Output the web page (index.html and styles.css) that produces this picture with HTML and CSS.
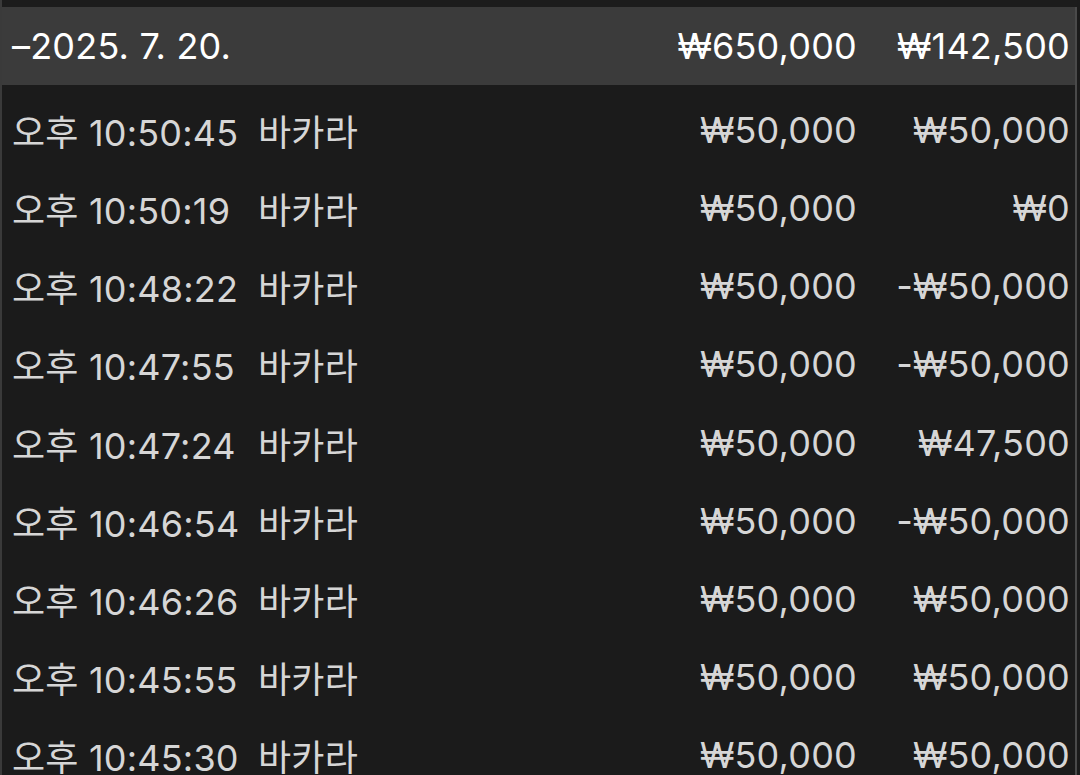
FILE: index.html
```html
<!DOCTYPE html>
<html lang="ko">
<head>
<meta charset="utf-8">
<link rel="stylesheet" href="styles.css">
</head>
<body>
<div class="frame">
  <div class="top-strip"></div>
  <div class="list">
    <div class="row header">
      <span class="time">–2025. 7. 20.</span>
      <span class="game"></span>
      <span class="bet">₩650,000</span>
      <span class="win">₩142,500</span>
    </div>
    <div class="row"><span class="time">오후 10:50:45</span><span class="game">바카라</span><span class="bet">₩50,000</span><span class="win">₩50,000</span></div>
    <div class="row"><span class="time">오후 10:50:19</span><span class="game">바카라</span><span class="bet">₩50,000</span><span class="win">₩0</span></div>
    <div class="row"><span class="time">오후 10:48:22</span><span class="game">바카라</span><span class="bet">₩50,000</span><span class="win">-₩50,000</span></div>
    <div class="row"><span class="time">오후 10:47:55</span><span class="game">바카라</span><span class="bet">₩50,000</span><span class="win">-₩50,000</span></div>
    <div class="row"><span class="time">오후 10:47:24</span><span class="game">바카라</span><span class="bet">₩50,000</span><span class="win">₩47,500</span></div>
    <div class="row"><span class="time">오후 10:46:54</span><span class="game">바카라</span><span class="bet">₩50,000</span><span class="win">-₩50,000</span></div>
    <div class="row"><span class="time">오후 10:46:26</span><span class="game">바카라</span><span class="bet">₩50,000</span><span class="win">₩50,000</span></div>
    <div class="row"><span class="time">오후 10:45:55</span><span class="game">바카라</span><span class="bet">₩50,000</span><span class="win">₩50,000</span></div>
    <div class="row"><span class="time">오후 10:45:30</span><span class="game">바카라</span><span class="bet">₩50,000</span><span class="win">₩50,000</span></div>
  </div>
</div>
</body>
</html>
```
FILE: styles.css
```css
html, body {
  margin: 0;
  padding: 0;
  background: #1b1b1b;
  overflow: hidden;
}
.frame {
  width: 1080px;
  height: 775px;
  box-sizing: border-box;
  border-left: 2px solid #3a3a3a;
  border-right: 3px solid #1b1b1b;
  box-shadow: inset -2px 0 0 #4a4a4a;
  background: #1b1b1b;
  font-family: Inter, "Noto Sans CJK KR", sans-serif;
  overflow: hidden;
}
.top-strip {
  height: 7px;
  background: #1c1c1c;
}
.list {
  display: flex;
  flex-direction: column;
}
.row {
  display: grid;
  grid-template-columns: 246px 1fr auto 213px;
  align-items: center;
  height: 78.125px;
  box-sizing: border-box;
  padding: 12px 7px 0 10px;
  font-size: 36px;
  color: #d6d6d6;
  white-space: nowrap;
  letter-spacing: 0.2px;
}
.row.header {
  height: 78px;
  padding-top: 0;
  background: #3b3b3b;
  color: #ffffff;
  margin-right: 2px;
  padding-right: 5px;
}
.bet, .win {
  text-align: right;
}
```
